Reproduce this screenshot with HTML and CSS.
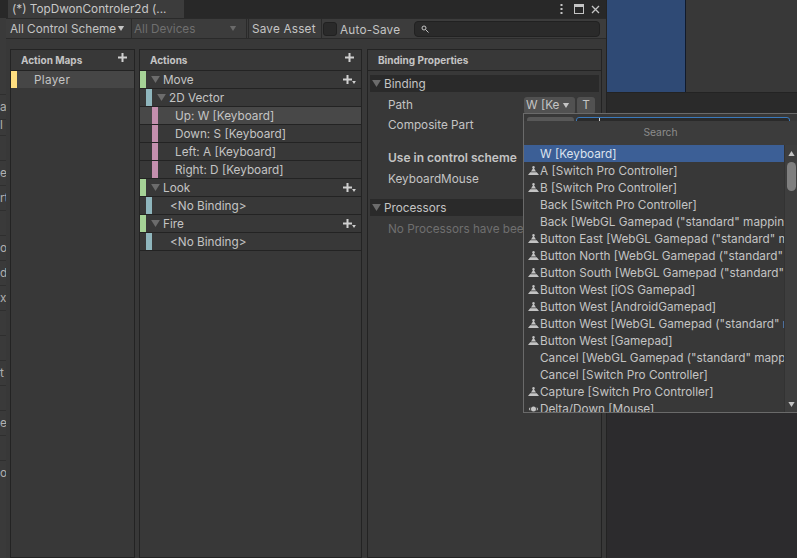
FILE: index.html
```html
<!DOCTYPE html>
<html lang="en">

<head>
    <meta charset="UTF-8">
    <meta name="viewport" content="width=device-width, initial-scale=1.0">
    <title>TopDwonControler2d</title>
    <link rel="stylesheet" href="styles.css">
</head>

<body>
    <svg class="defs" width="0" height="0">
        <symbol id="tri" viewBox="0 0 10 8"><path d="M0 0H10L5 8Z" /></symbol>
        <symbol id="plus" viewBox="0 0 9 9"><path d="M3.500 0h2v3.500H9v2H5.500V9h-2V5.500H0v-2h3.500Z" /></symbol>
        <symbol id="stick" viewBox="0 0 11 10"><path d="M5.500 0a1.300 1.300 0 0 1 .6 2.450L8 5.600H3L4.900 2.450A1.300 1.300 0 0 1 5.500 0ZM2.200 6.300H8.800L11 9H0Z" /></symbol>
        <symbol id="mouse" viewBox="0 0 11 10"><path d="M5.500 2.500a2.500 2.500 0 1 1 0 5 2.500 2.500 0 1 1 0-5ZM2.200 3V7L0.800 5ZM8.800 3V7L10.200 5Z" /></symbol>
    </svg>

    <div class="behind">
        <div class="behind-row first">a</div>
        <div class="behind-row short">l</div>
        <div class="behind-row"></div>
        <div class="behind-row">ed</div>
        <div class="behind-row">rt</div>
        <div class="behind-row"></div>
        <div class="behind-row">o</div>
        <div class="behind-row">di</div>
        <div class="behind-row">xt</div>
        <div class="behind-row"></div>
        <div class="behind-row"></div>
        <div class="behind-row">t</div>
        <div class="behind-row"></div>
        <div class="behind-row">er</div>
        <div class="behind-row"></div>
        <div class="behind-row">or</div>
    </div>

    <div class="window">
        <div class="tabbar">
            <div class="tab">(*) TopDwonControler2d (...</div>
            <div class="win-btns">
                <svg class="kebab" width="3" height="10" viewBox="0 0 3 10"><path d="M0.500 0h2v2h-2ZM0.500 4h2v2h-2ZM0.500 8h2v2h-2Z" /></svg>
                <svg class="maxi" width="10" height="10" viewBox="0 0 10 10"><path d="M0 0H10V10H0ZM1 3V9H9V3Z" fill-rule="evenodd" /></svg>
                <svg class="close" width="9" height="9" viewBox="0 0 9 9"><path d="M1 1L8 8M8 1L1 8" /></svg>
            </div>
        </div>

        <div class="toolbar">
            <div class="tool-drop schemes"><span class="drop-text">All Control Schemes</span><svg class="caret"><use href="#tri" /></svg></div>
            <div class="tool-drop devices"><span class="drop-text">All Devices</span><svg class="caret"><use href="#tri" /></svg></div>
            <div class="tool-btn">Save Asset</div>
            <div class="check"></div>
            <div class="check-label">Auto-Save</div>
            <div class="search">
                <svg width="8" height="8" viewBox="0 0 8 8"><circle cx="3" cy="3" r="2" /><path d="M4.500 4.500L7.500 7.500" /></svg>
            </div>
        </div>

        <div class="main">
            <div class="panel maps">
                <div class="panel-head"><span>Action Maps</span><svg class="plus"><use href="#plus" /></svg></div>
                <div class="row lv1 map-row"><i class="stripe yellow"></i><span class="player">Player</span></div>
            </div>

            <div class="panel actions">
                <div class="panel-head"><span>Actions</span><svg class="plus"><use href="#plus" /></svg></div>
                <div class="row lv1"><i class="stripe green"></i><svg class="fold"><use href="#tri" /></svg><span>Move</span><span class="add"><svg class="plus"><use href="#plus" /></svg><svg class="add-tri"><use href="#tri" /></svg></span></div>
                <div class="row lv2"><i class="stripe teal"></i><svg class="fold"><use href="#tri" /></svg><span>2D Vector</span></div>
                <div class="row lv3 selected"><i class="stripe pink"></i><span class="part">Up: W [Keyboard]</span></div>
                <div class="row lv3"><i class="stripe pink"></i><span class="part">Down: S [Keyboard]</span></div>
                <div class="row lv3"><i class="stripe pink"></i><span class="part">Left: A [Keyboard]</span></div>
                <div class="row lv3"><i class="stripe pink"></i><span class="part">Right: D [Keyboard]</span></div>
                <div class="row lv1"><i class="stripe green"></i><svg class="fold"><use href="#tri" /></svg><span>Look</span><span class="add"><svg class="plus"><use href="#plus" /></svg><svg class="add-tri"><use href="#tri" /></svg></span></div>
                <div class="row lv2"><i class="stripe teal"></i><span class="none">&lt;No Binding&gt;</span></div>
                <div class="row lv1"><i class="stripe green"></i><svg class="fold"><use href="#tri" /></svg><span>Fire</span><span class="add"><svg class="plus"><use href="#plus" /></svg><svg class="add-tri"><use href="#tri" /></svg></span></div>
                <div class="row lv2"><i class="stripe teal"></i><span class="none">&lt;No Binding&gt;</span></div>
            </div>

            <div class="panel props">
                <div class="panel-head"><span>Binding Properties</span></div>
                <div class="section first-section"><svg class="fold"><use href="#tri" /></svg><span>Binding</span></div>
                <div class="field path-field">
                    <span class="field-label">Path</span>
                    <div class="path-drop"><span class="path-text">W [Ke</span><svg class="caret"><use href="#tri" /></svg></div>
                    <div class="t-btn">T</div>
                </div>
                <div class="field">Composite Part</div>
                <div class="field scheme-title">Use in control scheme</div>
                <div class="field">KeyboardMouse</div>
                <div class="section proc-section"><svg class="fold"><use href="#tri" /></svg><span>Processors</span></div>
                <div class="field muted">No Processors have bee</div>
            </div>
        </div>
    </div>

    <div class="scene">
        <div class="scene-top">
            <div class="scene-blue"></div>
            <div class="scene-gray"></div>
        </div>
        <div class="scene-bar"></div>
    </div>

    <div class="popup">
        <div class="popup-peek">
            <div class="peek-btn"></div>
            <div class="peek-field"><i class="peek-caret"></i></div>
        </div>
        <div class="popup-title">Search</div>
        <div class="popup-body">
            <div class="list">
                <div class="item active">W [Keyboard]</div>
                <div class="item"><svg class="ico"><use href="#stick" /></svg>A [Switch Pro Controller]</div>
                <div class="item"><svg class="ico"><use href="#stick" /></svg>B [Switch Pro Controller]</div>
                <div class="item">Back [Switch Pro Controller]</div>
                <div class="item">Back [WebGL Gamepad ("standard" mapping)]</div>
                <div class="item"><svg class="ico"><use href="#stick" /></svg>Button East [WebGL Gamepad ("standard" mapping)]</div>
                <div class="item"><svg class="ico"><use href="#stick" /></svg>Button North [WebGL Gamepad ("standard" mapping)]</div>
                <div class="item"><svg class="ico"><use href="#stick" /></svg>Button South [WebGL Gamepad ("standard" mapping)]</div>
                <div class="item"><svg class="ico"><use href="#stick" /></svg>Button West [iOS Gamepad]</div>
                <div class="item"><svg class="ico"><use href="#stick" /></svg>Button West [AndroidGamepad]</div>
                <div class="item"><svg class="ico"><use href="#stick" /></svg>Button West [WebGL Gamepad ("standard" mapping)]</div>
                <div class="item"><svg class="ico"><use href="#stick" /></svg>Button West [Gamepad]</div>
                <div class="item">Cancel [WebGL Gamepad ("standard" mapping)]</div>
                <div class="item">Cancel [Switch Pro Controller]</div>
                <div class="item"><svg class="ico"><use href="#stick" /></svg>Capture [Switch Pro Controller]</div>
                <div class="item"><svg class="ico"><use href="#mouse" /></svg>Delta/Down [Mouse]</div>
            </div>
            <div class="scrollbar">
                <svg class="scroll-up"><use href="#tri" /></svg>
                <div class="thumb"></div>
                <svg class="scroll-down"><use href="#tri" /></svg>
            </div>
        </div>
    </div>
</body>

</html>
```

FILE: styles.css
```css
* {
    padding: 0;
    margin: 0;
    box-sizing: border-box;
}

html,
body {
    height: 100%;
}

body {
    display: flex;
    height: 558px;
    overflow: hidden;
    background-color: #2c2b2d;
    font-family: Inter, "Liberation Sans", sans-serif;
    font-size: 11.750px;
    color: #c4c4c4;
}

svg {
    display: block;
    flex: none;
}

.defs {
    position: absolute;
}

/* window behind, only a sliver of it shows */
.behind {
    width: 6px;
    flex: none;
    padding-top: 94px;
    background-color: #3a3a3a;
    overflow: hidden;
    color: #b0b0b0;
}

.behind-row {
    height: 25px;
    line-height: 25px;
    white-space: nowrap;
    border-top: 1px solid #2f2f2f;
}

.behind-row.short {
    height: 16px;
    line-height: 10px;
}

/* input actions window */
.window {
    width: 601px;
    flex: none;
    display: flex;
    flex-direction: column;
    background-color: #383838;
    border-right: 1px solid #232323;
}

.tabbar {
    height: 18px;
    flex: none;
    display: flex;
    justify-content: space-between;
    background-color: #282828;
    margin-left: -6px;
    padding-left: 8px;
}

.tab {
    width: 176px;
    padding-left: 4px;
    line-height: 19px;
    background-color: #3c3c3c;
    color: #c8c8c8;
    white-space: nowrap;
}

.win-btns {
    display: flex;
    align-items: center;
    padding-right: 6px;
}

.kebab,
.maxi {
    fill: #c4c4c4;
}

.kebab {
    margin-right: 11px;
}

.maxi {
    margin-right: 7px;
}

.close {
    stroke: #c4c4c4;
    stroke-width: 1.3;
    fill: none;
}

.toolbar {
    height: 21px;
    flex: none;
    display: flex;
    align-items: center;
    padding-left: 2px;
    background-color: #3c3c3c;
    border-top: 1px solid #2a2a2a;
    border-bottom: 1px solid #2a2a2a;
}

.tool-drop {
    height: 19px;
    display: flex;
    align-items: center;
    justify-content: space-between;
    border-right: 1px solid #2a2a2a;
    padding: 0 3px 0 2px;
}

.schemes {
    width: 124px;
}

.devices {
    width: 115px;
    color: #6f6f6f;
    margin-right: 1px;
}

.drop-text {
    width: 106px;
    padding-top: 1px;
    overflow: hidden;
    white-space: nowrap;
}

.caret {
    width: 8px;
    height: 5px;
    fill: #c4c4c4;
    margin-right: 1px;
}

.schemes .caret {
    margin-right: 3px;
}

.devices .caret {
    fill: #6a6a6a;
    margin-right: 6px;
}

.tool-btn {
    width: 74px;
    height: 19px;
    line-height: 21px;
    padding-left: 3px;
    border-left: 1px solid #2a2a2a;
    border-right: 1px solid #2a2a2a;
    letter-spacing: 0.2px;
}

.check {
    width: 14px;
    height: 14px;
    margin-left: 1px;
    border-radius: 3px;
    background-color: #2a2a2a;
    border: 1px solid #212121;
}

.check-label {
    width: 77px;
    padding: 2px 0 0 3px;
    letter-spacing: 0.2px;
}

.search {
    width: 186px;
    height: 16px;
    display: flex;
    align-items: center;
    padding-left: 6px;
    border-radius: 4px;
    background-color: #2a2a2a;
    border: 1px solid #212121;
}

.search svg {
    stroke: #c4c4c4;
    fill: none;
}

.main {
    flex: 1;
    display: flex;
    padding: 10px 0 0 4px;
    min-height: 0;
}

.panel {
    height: 509px;
    flex: none;
    overflow: hidden;
    border: 1px solid #232323;
    background-color: #383838;
}

.maps {
    width: 125px;
    margin-right: 4px;
}

.actions {
    width: 223px;
    margin-right: 5px;
}

.props {
    width: 235px;
}

.panel-head {
    height: 21px;
    display: flex;
    align-items: center;
    justify-content: space-between;
    padding: 0 7px 0 10px;
    border-bottom: 1px solid #232323;
    font-size: 10px;
    font-weight: 700;
    color: #c4c4c4;
}

.plus {
    width: 9px;
    height: 9px;
    fill: #d0d0d0;
    margin-top: -5px;
}

.row {
    height: 18px;
    display: flex;
    align-items: center;
    border-bottom: 1px solid #232323;
    white-space: nowrap;
}

.map-row {
    height: 17px;
    border-bottom: 0;
    background-color: #464646;
}

.selected {
    background-color: #484848;
}

.stripe {
    display: block;
    width: 6px;
    height: 17px;
    flex: none;
    align-self: flex-start;
}

.yellow {
    background-color: #ffdf80;
}

.green {
    background-color: #a5d296;
}

.teal {
    background-color: #8fb6bd;
}

.pink {
    background-color: #c48fae;
}

.lv2 .stripe {
    margin-left: 6px;
}

.lv3 .stripe {
    margin-left: 12px;
}

.fold {
    width: 9px;
    height: 7px;
    fill: #6c6c6c;
    margin: 0 3px 0 5px;
}

.player {
    margin-left: 17px;
    letter-spacing: 0.3px;
}

.part {
    margin-left: 17px;
}

.none {
    margin-left: 18px;
}

.add {
    margin-left: auto;
    margin-right: 5px;
    display: flex;
    align-items: flex-end;
}

.add .plus {
    margin-top: 0;
}

.add-tri {
    width: 4px;
    height: 3px;
    fill: #d0d0d0;
}

.section {
    height: 17px;
    margin: 0 2px;
    display: flex;
    align-items: center;
    background-color: #2a2a2a;
    white-space: nowrap;
}

.first-section {
    margin-top: 4px;
}

.proc-section {
    margin-top: 10px;
}

.section .fold {
    margin: 0 3px 0 2px;
}

.field {
    height: 20px;
    line-height: 20px;
    padding-left: 20px;
    white-space: nowrap;
}

.path-field {
    display: flex;
    align-items: center;
    margin-top: 3px;
}

.field-label {
    width: 136px;
}

.path-drop {
    width: 51px;
    height: 17px;
    display: flex;
    align-items: center;
    padding: 0 3px 0 2px;
    border-radius: 3px;
    background-color: #515151;
}

.path-text {
    width: 36px;
    overflow: hidden;
    white-space: nowrap;
}

.t-btn {
    width: 18px;
    height: 17px;
    line-height: 17px;
    margin-left: 2px;
    text-align: center;
    border-radius: 3px;
    background-color: #515151;
}

.scheme-title {
    height: 21px;
    margin-top: 13px;
    font-size: 12px;
    font-weight: 600;
}

.section + .muted {
    margin-top: 3px;
}

.muted {
    color: #6f6f6f;
}

/* editor area on the right */
.scene {
    flex: 1;
    display: flex;
    flex-direction: column;
}

.scene-top {
    height: 93px;
    display: flex;
    border-bottom: 1px solid #232323;
}

.scene-blue {
    width: 79px;
    background-color: #2f4a75;
    border-right: 1px solid #111a2b;
}

.scene-gray {
    flex: 1;
    background-color: #383838;
}

.scene-bar {
    height: 20px;
    background-color: #2a2a2a;
}

/* binding path dropdown */
.popup {
    position: absolute;
    left: 523px;
    top: 113px;
    width: 274px;
    height: 300px;
    display: flex;
    flex-direction: column;
    background-color: #383838;
    border: 1px solid #6a6a6a;
    border-right: 0;
    overflow: hidden;
}

.popup-peek {
    height: 7px;
    flex: none;
    display: flex;
    gap: 2px;
    padding: 3px 7px 0 3px;
    overflow: hidden;
}

.peek-btn {
    width: 47px;
    height: 16px;
    border-radius: 3px;
    background-color: #585858;
}

.peek-field {
    flex: 1;
    height: 16px;
    padding-left: 22px;
    border: 1px solid #3a79bb;
    border-radius: 3px;
    background-color: #2a2a2a;
}

.peek-caret {
    display: block;
    width: 1px;
    height: 14px;
    background-color: #d0d0d0;
}

.popup-title {
    height: 24px;
    flex: none;
    line-height: 23px;
    font-size: 10.300px;
    text-align: center;
    color: #8c8c8c;
    background-color: #3c3c3c;
}

.popup-body {
    flex: 1;
    display: flex;
    min-height: 0;
}

.list {
    width: 260px;
    flex: none;
    overflow: hidden;
}

.item {
    position: relative;
    height: 17px;
    line-height: 19px;
    padding-left: 16px;
    white-space: nowrap;
    overflow: hidden;
}

.item.active {
    background-color: #3c5f96;
    color: #dce3ee;
}

.ico {
    position: absolute;
    left: 4px;
    top: 4px;
    width: 11px;
    height: 10px;
    fill: #c4c4c4;
}

.scrollbar {
    flex: 1;
    display: flex;
    flex-direction: column;
    align-items: center;
    background-color: #3e3e3e;
    border-left: 1px solid #333;
}

.scroll-up {
    width: 7px;
    height: 5px;
    margin-top: 6px;
    fill: #c4c4c4;
    transform: rotate(180deg);
}

.thumb {
    width: 9px;
    height: 29px;
    margin-top: 6px;
    border-radius: 5px;
    background-color: #7f7f7f;
}

.scroll-down {
    width: 7px;
    height: 5px;
    margin-top: auto;
    margin-bottom: 5px;
    fill: #c4c4c4;
}
```
